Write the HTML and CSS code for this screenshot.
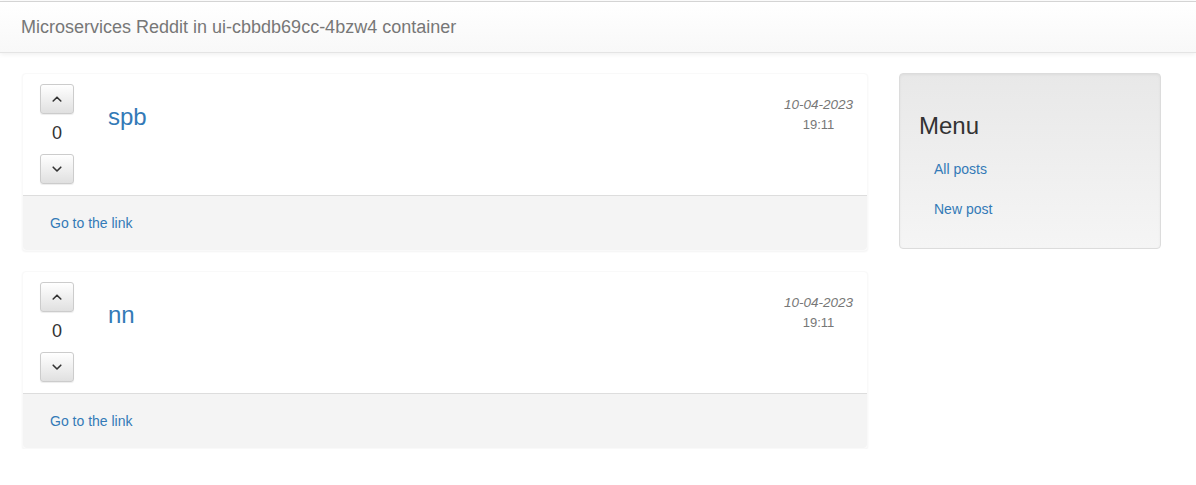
FILE: index.html
```html
<!DOCTYPE html>
<html lang="en">
<head>
<meta charset="utf-8">
<title>Microservices Reddit</title>
<link rel="stylesheet" href="styles.css">
</head>
<body>
<nav class="navbar">
  <span class="brand">Microservices Reddit in ui-cbbdb69cc-4bzw4 container</span>
</nav>
<main class="layout">
  <section class="posts">
    <article class="post">
      <div class="post-body">
        <div class="vote">
          <button class="vote-btn" type="button" aria-label="Upvote">
            <svg width="12" height="12" viewBox="0 0 12 12"><path d="M2.2 8 L6 4.2 L9.8 8" fill="none" stroke="#333" stroke-width="1.6" stroke-linecap="round" stroke-linejoin="round"/></svg>
          </button>
          <span class="count">0</span>
          <button class="vote-btn" type="button" aria-label="Downvote">
            <svg width="12" height="12" viewBox="0 0 12 12"><path d="M2.2 4.2 L6 8 L9.8 4.2" fill="none" stroke="#333" stroke-width="1.6" stroke-linecap="round" stroke-linejoin="round"/></svg>
          </button>
        </div>
        <h3 class="post-title"><a href="#">spb</a></h3>
        <div class="post-date">
          <em>10-04-2023</em>
          <span>19:11</span>
        </div>
      </div>
      <div class="post-footer"><a href="#">Go to the link</a></div>
    </article>
    <article class="post">
      <div class="post-body">
        <div class="vote">
          <button class="vote-btn" type="button" aria-label="Upvote">
            <svg width="12" height="12" viewBox="0 0 12 12"><path d="M2.2 8 L6 4.2 L9.8 8" fill="none" stroke="#333" stroke-width="1.6" stroke-linecap="round" stroke-linejoin="round"/></svg>
          </button>
          <span class="count">0</span>
          <button class="vote-btn" type="button" aria-label="Downvote">
            <svg width="12" height="12" viewBox="0 0 12 12"><path d="M2.2 4.2 L6 8 L9.8 4.2" fill="none" stroke="#333" stroke-width="1.6" stroke-linecap="round" stroke-linejoin="round"/></svg>
          </button>
        </div>
        <h3 class="post-title"><a href="#">nn</a></h3>
        <div class="post-date">
          <em>10-04-2023</em>
          <span>19:11</span>
        </div>
      </div>
      <div class="post-footer"><a href="#">Go to the link</a></div>
    </article>
  </section>
  <aside class="well">
    <h3 class="menu-title">Menu</h3>
    <ul class="menu">
      <li><a href="#">All posts</a></li>
      <li><a href="#">New post</a></li>
    </ul>
  </aside>
</main>
</body>
</html>
```

FILE: styles.css
```css
* { box-sizing: border-box; }

html, body {
  margin: 0;
  background: #fff;
}

body {
  padding-top: 1px;
  font-family: "Liberation Sans", Arial, Helvetica, sans-serif;
  font-size: 14px;
  line-height: 20px;
  color: #333;
}

a {
  color: #337ab7;
  text-decoration: none;
}

.navbar {
  height: 52px;
  border-top: 1px solid #d4d4d4;
  border-bottom: 1px solid #e4e4e4;
  background: linear-gradient(to bottom, #fff 0, #f8f8f8 100%);
  box-shadow: 0 1px 5px rgba(0, 0, 0, 0.075);
  padding-left: 21px;
  display: flex;
  align-items: center;
}

.brand {
  font-size: 18px;
  line-height: 20px;
  color: #777;
}

.layout {
  display: flex;
  align-items: flex-start;
  gap: 31px;
  padding: 20px 0 0 22px;
}

.posts {
  width: 846px;
  display: flex;
  flex-direction: column;
  gap: 20px;
}

.post {
  border: 1px solid #f9f9f9;
  border-radius: 4px;
  box-shadow: 0 1px 2px rgba(0, 0, 0, 0.05);
  background: #fff;
}

.post-body {
  display: flex;
  align-items: flex-start;
  padding: 10px 14px 11px 17px;
}

.vote {
  width: 34px;
  display: flex;
  flex-direction: column;
  align-items: center;
}

.vote-btn {
  width: 34px;
  height: 30px;
  padding: 0;
  border: 1px solid #ccc;
  border-radius: 3px;
  background: linear-gradient(to bottom, #fff 0, #e0e0e0 100%);
  box-shadow: inset 0 1px 0 rgba(255, 255, 255, 0.15), 0 1px 1px rgba(0, 0, 0, 0.075);
  display: flex;
  align-items: center;
  justify-content: center;
}

.count {
  height: 40px;
  line-height: 38px;
  font-size: 18px;
  color: #333;
}

.post-title {
  margin: 20px 0 0 34px;
  font-size: 24px;
  font-weight: 500;
  line-height: 26px;
  flex: 1;
}

.post-date {
  margin-top: 11px;
  display: flex;
  flex-direction: column;
  align-items: center;
  font-size: 13px;
  line-height: 20px;
  color: #777;
}

.post-date em {
  font-style: italic;
  font-size: 13.5px;
}

.post-footer {
  border-top: 1px solid #ddd;
  background: #f4f4f4;
  padding: 17px 27px;
  border-radius: 0 0 4px 4px;
  line-height: 20px;
}

.well {
  width: 262px;
  padding: 19px;
  border: 1px solid #dcdcdc;
  border-radius: 4px;
  background: linear-gradient(to bottom, #e8e8e8 0, #f5f5f5 100%);
  box-shadow: inset 0 1px 3px rgba(0, 0, 0, 0.05), 0 1px 0 rgba(255, 255, 255, 0.1);
}

.menu-title {
  margin: 20px 0 10px;
  font-size: 24px;
  font-weight: 500;
  line-height: 26px;
  color: #333;
}

.menu {
  list-style: none;
  margin: 0;
  padding: 0;
}

.menu li a {
  display: block;
  padding: 10px 15px;
  line-height: 20px;
}
```
